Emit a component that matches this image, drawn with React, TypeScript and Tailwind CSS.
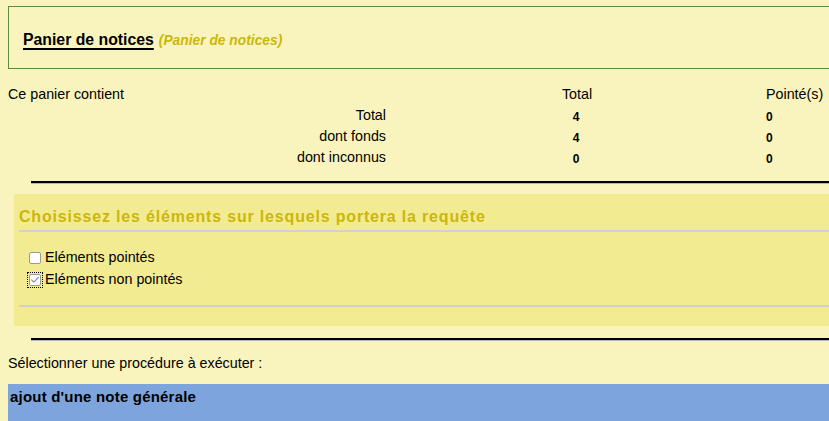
import { Check } from 'lucide-react';

function Hr() {
  return <div className="ml-[31px] h-0 border-t-2 border-b border-t-black border-b-[#b5b5b5]" />;
}

function Box({ checked, label }: { checked?: boolean; label: string }) {
  return (
    <div className="flex h-[22px] items-center">
      <span className={'flex h-[16px] w-[16px] items-center justify-center ' + (checked ? 'outline-1 outline-dotted outline-black -outline-offset-1' : '')}>
        <span className="flex h-[12px] w-[12px] items-center justify-center rounded-[2px] border border-[#9a9a9a] bg-white">
          {checked && <Check className="h-[10px] w-[10px] text-[#8a94a8]" strokeWidth={3} />}
        </span>
      </span>
      <span className="ml-[2px]">{label}</span>
    </div>
  );
}

const rows = [
  { label: 'Total', total: '4', pointes: '0' },
  { label: 'dont fonds', total: '4', pointes: '0' },
  { label: 'dont inconnus', total: '0', pointes: '0' },
];

export default function App() {
  return (
    <div className="min-h-[421px] w-full overflow-hidden bg-[#f9f4bd] font-['Liberation_Sans',Arial,sans-serif] text-[14.3px] text-black">
      <div className="w-[880px] pt-[6px]">
        {/* titre */}
        <div className="ml-[8px] flex h-[63px] items-baseline border border-[#5e8c3c] pl-[14px] pt-[25px] leading-none">
          <span className="text-[15.8px] font-bold underline decoration-2 underline-offset-[3px]">Panier de notices</span>
          <span className="ml-[5px] text-[13.8px] font-bold italic text-[#cbb70a]">(Panier de notices)</span>
        </div>

        {/* tableau */}
        <div className="ml-[8px] mt-[15px] grid grid-cols-[382px_374px_auto]">
          <div className="flex h-[21px] items-center">Ce panier contient</div>
          <div className="flex h-[21px] items-center justify-center">Total</div>
          <div className="flex h-[21px] items-center pl-[2px]">Pointé(s)</div>
          {rows.map((r) => (
            <>
              <div key={r.label + 'l'} className="flex h-[21px] items-center justify-end pr-[4px]">{r.label}</div>
              <div key={r.label + 't'} className="flex h-[21px] items-center justify-center pt-[2px] pr-[2px] text-[12px] font-bold">{r.total}</div>
              <div key={r.label + 'p'} className="flex h-[21px] items-center pt-[2px] pl-[2px] text-[12px] font-bold">{r.pointes}</div>
            </>
          ))}
        </div>

        <div className="mt-[13px]"><Hr /></div>

        {/* choix */}
        <div className="ml-[14px] mt-[10px] h-[132px] bg-[#f3eb91] pl-[5px] pt-[13px]">
          <div className="flex h-[20px] items-center text-[16px] font-bold leading-none tracking-[0.82px] text-[#cbb70a]">
            Choisissez les éléments sur lesquels portera la requête
          </div>
          <div className="mt-[3px] h-[2px] bg-[#cfcfd6]" />
          <div className="ml-[8px] mt-[15px]">
            <Box label="Eléments pointés" />
            <Box checked label="Eléments non pointés" />
          </div>
          <div className="mt-[14px] h-[2px] bg-[#cfcfd6]" />
        </div>

        <div className="mt-[12px]"><Hr /></div>

        <div className="ml-[8px] mt-[14px] flex h-[18px] items-center">Sélectionner une procédure à exécuter :</div>

        <div className="ml-[8px] mt-[11px] h-[40px] bg-[#7ea4dd] pl-[2px] pt-[2px] text-[15px] font-bold tracking-[0.2px]">ajout d'une note générale</div>
      </div>
    </div>
  );
}
